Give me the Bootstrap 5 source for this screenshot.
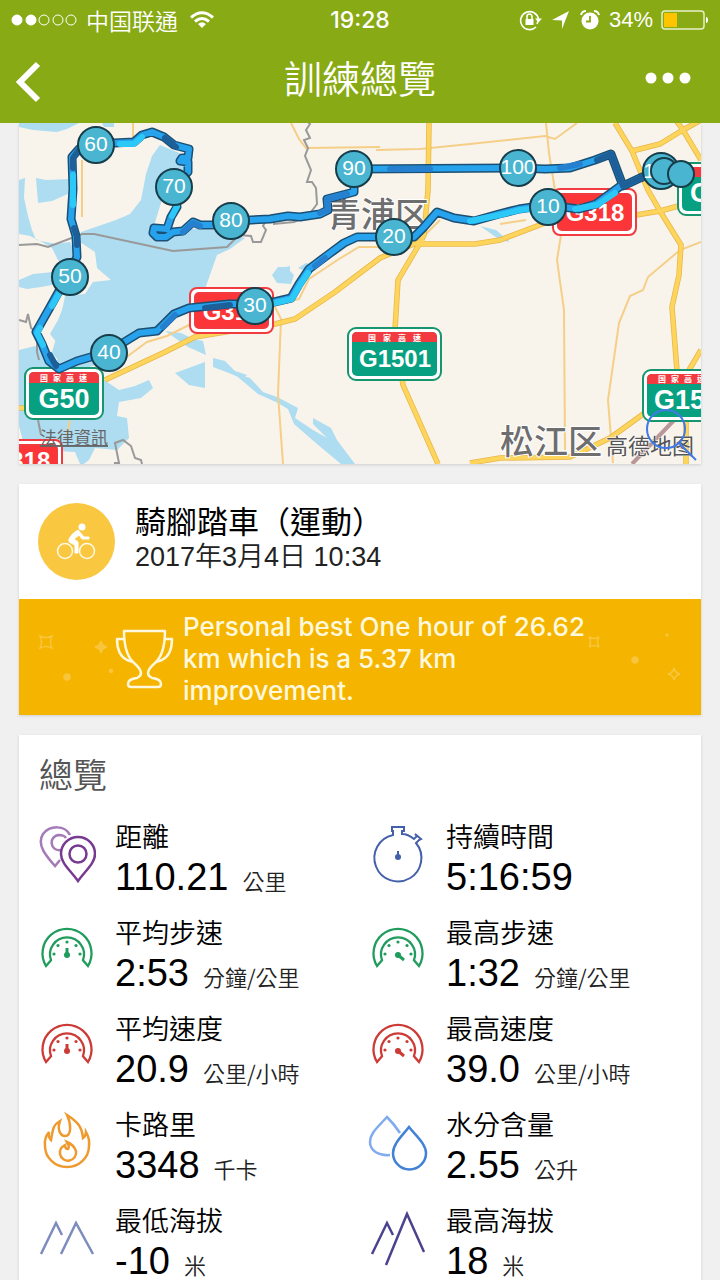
<!DOCTYPE html>
<html lang="zh-Hant">
<head>
<meta charset="utf-8">
<meta name="viewport" content="width=device-width, initial-scale=1">
<title>訓練總覽</title>
<link href="https://cdn.jsdelivr.net/npm/bootstrap@5.3.0/dist/css/bootstrap.min.css" rel="stylesheet">
<style>
  body { background: #f0f0f0; color: #000; font-family: "Liberation Sans", "Noto Sans CJK TC", sans-serif; font-weight: 350; }
  .top-bar { background: #88aa14; color: #fff; }
  .status { display: grid; grid-template-columns: 1fr auto 1fr; height: 40px; padding: 0 11px; font-size: 22px; line-height: 40px; }
  .carrier { font-family: "Noto Sans CJK SC", sans-serif; font-size: 23px; line-height: 38px; }
  .clock { font-family: Inter, sans-serif; font-size: 23px; font-weight: 500; }
  .title-row { display: grid; grid-template-columns: 1fr auto 1fr; height: 83px; padding: 0 15px; }
  .title-row h1 { font-size: 38px; line-height: 80px; font-weight: 350; }
  .bar-btn { color: #fff; line-height: 0; }
  .scroller { overflow-y: auto; scrollbar-width: none; padding: 0 19px 20px; }
  .scroller::-webkit-scrollbar { display: none; }
  .panel { background: #fff; box-shadow: 0 1px 3px #0002; margin-bottom: 20px; }
  .sport { padding: 19px; gap: 20px; }
  .sport h2 { font-size: 31px; line-height: 40px; font-weight: 400; }
  .sport time { font-size: 27px; line-height: 28px; color: #222; }
  .record { background: #f4b400; color: #fff8dd; padding: 12px 96px 8px; gap: 9px; font-family: Inter, sans-serif; font-size: 26px; line-height: 32px; font-weight: 500; }
  .sparks { top: 0; height: 116px; width: 120px; }
  .sparks-l { left: 0; } .sparks-r { right: 0; width: 130px; }
  .overview { padding: 16px 0 0 20px; }
  .overview h2 { font-size: 34px; line-height: 50px; font-weight: 350; color: #555; margin-bottom: 20px; }
  .stat { gap: 20px; height: 96px; }
  .stat > div { margin-left: -1px; }
  .stat > svg { width: 57px; height: 64px; margin-top: 2px; fill: none; stroke-width: 3; }
  .stat dt { font-size: 27px; line-height: 34px; font-weight: 350; }
  .stat dd { font-size: 38px; line-height: 44px; font-weight: 400; margin: 0; }
  .stat dd small { font-size: 22px; font-weight: 350; font-family: "Noto Sans CJK TC", sans-serif; line-height: 1; margin-left: 14px; color: #222; }
  .map text { font-family: "Liberation Sans", "Noto Sans CJK SC", sans-serif; }
  .km circle { fill: #49b5d0; stroke: #173d4b; stroke-width: 2; }
  .km text { fill: #fff; font-size: 21px; text-anchor: middle; font-weight: 400; }
  .shield { fill: #fff; font-weight: 700; text-anchor: middle; }
  .map .tiny { font-size: 8px; fill: #fff; font-weight: 700; }
</style>
</head>
<body class="vh-100 d-flex flex-column overflow-hidden">
<header class="top-bar flex-shrink-0">
  <div class="status">
    <div class="d-flex align-items-center gap-2">
      <svg width="67" height="14" viewBox="0 0 67 14" fill="none" stroke="#fff"><circle cx="6" cy="7" r="5" fill="#fff"/><circle cx="20" cy="7" r="5" fill="#fff"/><circle cx="33" cy="7" r="5"/><circle cx="47" cy="7" r="5"/><circle cx="60" cy="7" r="5"/></svg>
      <span class="carrier">中国联通</span>
      <svg class="ms-1" width="24" height="18" viewBox="0 0 24 18" fill="none" stroke="#fff" stroke-width="3"><path d="M1 6.500Q12-3 23 6.500M5 10.500Q12 4.500 19 10.500"/><path d="M8 13q4-3.500 8 0l-4 4z" fill="#fff" stroke="none"/></svg>
    </div>
    <span class="clock">19:28</span>
    <div class="d-flex align-items-center justify-content-end">
      <svg width="24" height="22" viewBox="0 0 24 22" fill="none" stroke="#fff" stroke-width="1.600"><path d="M17 18A9 9 0 1 1 19.500 10M18 15q1-2 1-4"/><path d="M16 9.500h7l-3.500 4z" fill="#fff" stroke="none"/><path d="M8 10V7.500a2.500 2.500 0 0 1 5 0V10"/><path d="M6.500 10h8v6h-8z" fill="#fff" stroke="none"/></svg>
      <svg class="ms-2" width="20" height="20" viewBox="0 0 20 20" fill="#fff"><path d="M18 1 11 19V10.500L1 10z"/></svg>
      <svg class="ms-2" width="22" height="22" viewBox="0 0 22 22"><circle cx="11" cy="12" r="8.500" fill="#fff"/><path d="M2 6q1-4 5-4M20 6q-1-4-5-4" fill="none" stroke="#fff" stroke-width="2"/><path d="M11 7v5.500H7" fill="none" stroke="#88aa14" stroke-width="1.800"/></svg>
      <span class="ms-2 me-2">34%</span>
      <svg width="48" height="20" viewBox="0 0 48 20"><rect x="1" y="1" width="42" height="18" rx="3" fill="none" stroke="#e8efc9" stroke-width="1.500"/><path d="M3 3h13v14H3z" fill="#ffc400"/><path d="M45 7q2 0 2 3t-2 3z" fill="#fff"/></svg>
    </div>
  </div>
  <div class="title-row">
    <button class="bar-btn btn p-0 border-0 text-start" aria-label="返回"><svg width="28" height="44" viewBox="0 0 28 44" fill="none" stroke="#fff" stroke-width="6"><path d="M23 4 5 22 23 40"/></svg></button>
    <h1 class="m-0">訓練總覽</h1>
    <button class="bar-btn btn p-0 border-0 text-end" aria-label="更多"><svg class="mb-2" width="62" height="12" viewBox="0 0 62 12" fill="#fff"><circle cx="8" cy="6" r="5.500"/><circle cx="25" cy="6" r="5.500"/><circle cx="42" cy="6" r="5.500"/></svg></button>
  </div>
</header>

<main class="scroller flex-grow-1">
  <section class="panel">
    <svg class="map d-block w-100" viewBox="19 123 682 341" role="img" aria-label="路線地圖">
      <rect x="19" y="123" width="682" height="341" fill="#f8f4ec"/>
      <g fill="#aedcf0">
        <path d="M160 145l24 10 3 17-22 18-13 42 24-4 38 2 31 8-15 11-13 6-12 34-5 18-25 12-22 13-27 6-10 20-30 10-24-2-10-14 6-20 3-16 4-20 20-2 8-12 18-2-14-12-2-16-15-10 1-10 35-12 14-6 11-14 5-26 6-18z"/>
        <path d="M36 178l10 2 24-1v14l-18 8-14 2zM19 180l6-2-1 20 4 18 4 14 4 10 20 4 14-2 7 16-14 6-5-4-6-12-10-6-12-6-11-2zM19 280l14-6 20-2 4 12-16 3-14 2-8-2zM19 123h60l-12 6-10 3-24-2-14-3zM102 123h12v4h-10z"/>
        <path d="M19 350l16-4 20 14 30 2 22 20 12 8 16-4 14-6 4 8-12 10-22 4-2 14 10 2 2 20-12 12-22-2-6 12-8 6-6-14-34-2-14 6-8-30z"/>
        <path d="M58 320l8-20 10 30-18 14-8-10zM165 331l16 2 12 6 10 2 3 14-18-8zM213 358l12 3 10 10 12 4-4 4-14-6-16-6zM175 373l30-11v26l-16-3z"/>
        <path d="M233 373l17 5 13 14 14 5 21 11-3 10 18 12 14 8-14-14v-6l18 10 6 12 18 24h-14l-24-20-23-20-6-15-12-7-18-8zM272 275l6-8h8l4-1v5l4 4-3 9-14-1zM298 268l8-5 8 2-4 8zM480 226l16 4 14 12-10-2z"/>
      </g>
      <path fill="none" stroke="#f5cf88" stroke-width="2" d="M291 123l8 16 7 9 74-1M376 150l44-1 50-5 75-8 10 3 22-16M546 123l3 30 6 37M561 235l-4 25 7 50 1 140M701 242l-21 8-32 27-5 13-13 6-11 27-11 77 5 63M133 123v14M82 160v57M275 307l6 12-3 75 5 70M195 322l-28 14-20 6-30 22M285 303l14-4 10-20 30-20 20-12h20M70 420l-3 15M440 220l-20 20M500 224l26-4"/>
      <defs><path id="roads" d="M429 123l-1 67-4 45-4 8-22 37-3 50 8 55 20 45 15 34M421 244h54l25-4 45-17M630 216l30-5 41-11M424 240l-44 18-45 34-40 27-20 5-80 13-30 15-60 28M19 408h12M615 123l17 28 16 39 12 21 21 34-2 30-7 32 5 64M686 418v46M632 151l28-7 23-14 18-10M675 119l8 11 18 30M470 463l30-5 70-1 40-19 36-26M701 350l-12 20"/></defs>
      <use href="#roads" fill="none" stroke="#e9b64a" stroke-width="5.500"/>
      <use href="#roads" fill="none" stroke="#fdd55c" stroke-width="4"/>
      <path fill="none" stroke="#999" stroke-width="2" d="M19 245l18-1 11 3 34-13h12l79 17 54-4 12-12 12 1 2 6h8l5-12-3-4 4-8h7v6l20-2 14-6 9-12-1-16-4-6h-5l4-12-6-14 3-8-4-8 6-2-4-8 4-6-6-6M19 320l7 2 2-8 3 14 6 4v20l2 8M38 420l3 15M114 463h5l-4-20 8-3 8 6 4 12 6 2 1 4"/>
      <path d="M632 464l48-50" stroke="#b79799" stroke-width="4"/>
      <g fill="#6e6e6e" stroke="#fff" stroke-width="2" paint-order="stroke">
        <text x="327" y="227" font-size="34" font-weight="500">青浦区</text>
        <text x="500" y="454" font-size="34" font-weight="500">松江区</text>
      </g>
      <g stroke="#f23b40" stroke-width="2">
        <rect x="553" y="189" width="83" height="46" rx="7" fill="#fff"/><rect x="558" y="194" width="73" height="36" rx="4" fill="#fb3538"/>
        <rect x="190" y="288" width="83" height="45" rx="7" fill="#fff"/><rect x="195" y="293" width="73" height="35" rx="4" fill="#fb3538"/>
        <rect x="-22" y="440" width="84" height="46" rx="7" fill="#fff"/><rect x="-17" y="445" width="74" height="36" rx="4" fill="#fb3538"/>
      </g>
      <g stroke="#16966f" stroke-width="2">
        <rect x="25" y="368" width="78" height="51" rx="8" fill="#fff"/>
        <rect x="348" y="328" width="93" height="52" rx="8" fill="#fff"/>
        <rect x="643" y="370" width="93" height="51" rx="8" fill="#fff"/>
        <rect x="678" y="163" width="93" height="52" rx="8" fill="#fff"/>
      </g>
      <g fill="#07a080">
        <rect x="29" y="372" width="70" height="43" rx="5"/><rect x="352" y="332" width="85" height="44" rx="5"/><rect x="647" y="374" width="85" height="43" rx="5"/><rect x="682" y="167" width="85" height="44" rx="5"/>
      </g>
      <g fill="#f23b40"><path d="M29 383v-6q0-5 5-5h60q5 0 5 5v6zM352 342v-5q0-5 5-5h75q5 0 5 5v5zM647 384v-5q0-5 5-5h55v10zM682 177v-5q0-5 5-5h30v10z"/></g>
      <text class="tiny" x="40" y="381">国</text><text class="tiny" x="53" y="381">家</text><text class="tiny" x="66" y="381">高</text><text class="tiny" x="79" y="381">速</text>
      <text class="tiny" x="368" y="341">国</text><text class="tiny" x="383" y="341">家</text><text class="tiny" x="398" y="341">高</text><text class="tiny" x="413" y="341">速</text>
      <text class="tiny" x="658" y="382">国</text><text class="tiny" x="671" y="382">家</text><text class="tiny" x="684" y="382">高</text><text class="tiny" x="697" y="382">速</text>
      <g class="shield">
        <text x="595" y="221" font-size="24">G318</text>
        <text x="232" y="320" font-size="24">G318</text>
        <text x="21" y="469" font-size="24">G318</text>
        <text x="64" y="408" font-size="27">G50</text>
        <text x="395" y="367" font-size="24">G1501</text>
        <text x="654" y="409" font-size="27" style="text-anchor:start">G1501</text>
        <text x="690" y="202" font-size="27" style="text-anchor:start">G50</text>
      </g>
      <defs><path id="route" d="M655 172l-15 6-17 8-12-32-16 6-25 8-25 1-27-1-164 1v23l-27 7 1 11-8 4-20 3-12-1-18 3-39 2-18 4h-13l-7-3-10 9-10 1-7 5h-9l-4-4 1-5 13 1 4-12 6-10-4-21 15-14v-10l-8-1 2-3h6l1-9-15-4-10-8-12-5-10 3-8 7-20 1h-19l-16 6-7 8 1 32-2 30 5 17 1 21-8 17-10 17-10 18-13 23 6 12 7 17 10 8 18-8 31-9 31-19 18-2 17-17 15-6 40-4h25l20-2 17-4 8-14 10-15 20-15 15-11 13-6h57l10-10 13-15 17 6 20 3 25-7 20-5 27-4 33 4 17-5 26-19"/></defs>
      <g fill="none" stroke-linejoin="round" stroke-linecap="round" stroke-width="6">
        <use href="#route" stroke="#1b4f73" stroke-width="9"/>
        <use href="#route" stroke="#27a2ec"/>
        <path stroke="#1d5f99" d="M655 172l-15 6-17 8-12-32-14 6M176 147l-11-9M78 151l-5 7v10M74 228l3 9v8M50 355l6 11M205 308l25-3"/>
        <path stroke="#2680d0" d="M320 213l8-3-1-11 20-5M200 226l-7-3-10 9M390 169h40M560 168l20-4M175 315l-12 12M325 258l-10 8"/>
        <path stroke="#2cc9f8" d="M73 175v30M40 328l-3 5 6 12M120 144h14l8-7M275 303l17-4 8-14 8-12M470 221l30-6 20-5 10-1M575 209l22-4 18-12M172 216l5-10M60 292l-8 14"/>
      </g>
      <g class="km">
        <circle cx="96" cy="145" r="18"/><text x="96" y="151">60</text>
        <circle cx="174" cy="187" r="18"/><text x="174" y="193">70</text>
        <circle cx="231" cy="221" r="18"/><text x="231" y="227">80</text>
        <circle cx="354" cy="169" r="18"/><text x="354" y="175">90</text>
        <circle cx="518" cy="168" r="18"/><text x="518" y="174">100</text>
        <circle cx="548" cy="207" r="18"/><text x="548" y="213">10</text>
        <circle cx="394" cy="237" r="18"/><text x="394" y="243">20</text>
        <circle cx="255" cy="306" r="18"/><text x="255" y="312">30</text>
        <circle cx="109" cy="353" r="18"/><text x="109" y="359">40</text>
        <circle cx="70" cy="277" r="18"/><text x="70" y="283">50</text>
        <circle cx="661" cy="171" r="18"/><text x="649" y="178">1</text>
        <circle cx="664" cy="171" r="13"/><circle cx="681" cy="174" r="13"/>
      </g>
      <text x="606" y="454" font-size="22" font-weight="400" fill="#555" stroke="#fff" stroke-width="1" paint-order="stroke">高德地图</text>
      <a href="#legal"><text x="40" y="444" font-size="17" font-weight="400" fill="#666" text-decoration="underline">法律資訊</text></a>
      <g fill="none" stroke="#3f7ae8" stroke-width="2"><circle cx="666" cy="429" r="19"/><path d="M679 443l17 17"/></g>
    </svg>
  </section>

  <section class="panel">
    <div class="sport d-flex">
      <svg class="flex-shrink-0" width="77" height="77" viewBox="0 0 77 77"><circle cx="38.500" cy="38.500" r="38.500" fill="#f9c740"/><g fill="none" stroke="#fffae8" stroke-width="1.500"><circle cx="27" cy="48" r="7.500"/><circle cx="49" cy="48" r="7.500"/></g><circle cx="44" cy="24" r="3.500" fill="#fff"/><path d="M40 27q-6 3-9 9-1 3 2 4l4 2v8h3V39l-4-3 5-4 3 4h7v-2h-5z" fill="#fff" stroke="#fff" stroke-width="1" stroke-linejoin="round"/></svg>
      <div>
        <h2 class="m-0">騎腳踏車（運動）</h2>
        <time class="d-block" datetime="2017-03-04T10:34">2017年3月4日 10:34</time>
      </div>
    </div>
    <div class="record d-flex align-items-center position-relative">
      <svg class="sparks sparks-l position-absolute" viewBox="0 0 120 116" fill="none" stroke="#f8c53c" stroke-width="1.500"><path d="M21 37q6 3 12 0-3 6 0 12-6-3-12 0 3-6 0-12z"/><path d="M82 42q1 5 6 6-5 1-6 6-1-5-6-6 5-1 6-6z" fill="#f8c53c"/><circle cx="48" cy="78" r="3" fill="#f8c53c"/><circle cx="92" cy="72" r="1.500" fill="#f8c53c"/></svg>
      <svg class="sparks sparks-r position-absolute" viewBox="0 0 130 116" fill="none" stroke="#f8c53c" stroke-width="1.500"><path d="M18 38q5 3 10 0-3 5 0 10-5-3-10 0 3-5 0-10z"/><path d="M103 69q1 5 6 6-5 1-6 6-1-5-6-6 5-1 6-6z"/><circle cx="64" cy="61" r="3" fill="#f8c53c"/><circle cx="96" cy="36" r="1" fill="#f8c53c"/></svg>
      <svg class="flex-shrink-0" width="59" height="60" viewBox="0 0 59 60" fill="none" stroke="#fff8dd" stroke-width="2.500" stroke-linejoin="round"><path d="M9 2h41q0 22-9 31-8 7-8 11 0 3 4 5 9 1 9 6 0 3-3 3H16q-3 0-3-3 0-5 9-6 4-2 4-5 0-4-8-11Q9 24 9 2z"/><path d="M9 10H2q0 16 10 21l6 2M50 10h7q0 16-10 21l-6 2"/></svg>
      <div>Personal best One hour of 26.62 km which is a 5.37 km improvement.</div>
    </div>
  </section>

  <section class="panel overview">
    <h2>總覽</h2>
    <svg class="d-none">
      <symbol id="gauge" viewBox="0 0 57 64"><path d="M7 47A24.500 24.500 0 1 1 49 47L44 41.200A17 17 0 1 0 12 41.200Z" stroke-width="2.300"/><g fill="currentColor" stroke="none"><circle cx="28" cy="23" r="1.600"/><circle cx="19" cy="26.500" r="1.600"/><circle cx="37" cy="26.500" r="1.600"/><circle cx="15" cy="35" r="1.600"/><circle cx="41" cy="35" r="1.600"/></g></symbol>
    </svg>
    <dl class="row g-0 m-0">
      <div class="col-6 stat d-flex"><svg viewBox="0 0 57 64"><path d="M31 12C26 2 11 2 4 11-3 22 8 34 16 43l5-6M22 27c-11 2-13-14-2-15q5 0 7 3" stroke="#a47bb6" stroke-width="2.500"/><path d="M39 58C31 47 22 40 22 31a17 17 0 0 1 34 0c0 9-9 16-17 27z" stroke="#773a90" stroke-width="2.500"/><circle cx="39" cy="31" r="8.500" stroke="#773a90" stroke-width="2.500"/></svg><div><dt>距離</dt><dd>110.21<small>公里</small></dd></div></div>
      <div class="col-6 stat d-flex"><svg viewBox="0 0 57 64" stroke="#4560ab"><path d="M23 11V8h-1V4h12v4h-2v3q6 0 12 5l3-3-2-2 6 5-2 1-3 3a23.500 23.500 0 1 1-23-8z" stroke-width="2"/><circle cx="28" cy="34" r="3" fill="#4560ab" stroke="none"/><path d="M28 28v7" stroke-width="2"/></svg><div><dt>持續時間</dt><dd>5:16:59</dd></div></div>
      <div class="col-6 stat d-flex"><svg viewBox="0 0 57 64" color="#209c5c" stroke="#209c5c"><use href="#gauge"/><path d="M28 29v8" stroke-width="3"/><circle cx="28" cy="36" r="3" fill="#209c5c" stroke="none"/></svg><div><dt>平均步速</dt><dd>2:53<small>分鐘/公里</small></dd></div></div>
      <div class="col-6 stat d-flex"><svg viewBox="0 0 57 64" color="#209c5c" stroke="#209c5c"><use href="#gauge"/><path d="M28 36l6 5" stroke-width="3"/><circle cx="28" cy="36" r="3" fill="#209c5c" stroke="none"/></svg><div><dt>最高步速</dt><dd>1:32<small>分鐘/公里</small></dd></div></div>
      <div class="col-6 stat d-flex"><svg viewBox="0 0 57 64" color="#cc3b36" stroke="#cc3b36"><use href="#gauge"/><path d="M28 29v8" stroke-width="3"/><circle cx="28" cy="36" r="3" fill="#cc3b36" stroke="none"/></svg><div><dt>平均速度</dt><dd>20.9<small>公里/小時</small></dd></div></div>
      <div class="col-6 stat d-flex"><svg viewBox="0 0 57 64" color="#cc3b36" stroke="#cc3b36"><use href="#gauge"/><path d="M28 36l6 5" stroke-width="3"/><circle cx="28" cy="36" r="3" fill="#cc3b36" stroke="none"/></svg><div><dt>最高速度</dt><dd>39.0<small>公里/小時</small></dd></div></div>
      <div class="col-6 stat d-flex"><svg viewBox="0 0 57 64" stroke="#ee9a2e"><path d="M28 4c11 7 15 12 16 23q3-2 3-6 4 7 3 14a22 21 0 0 1-44 0q-1-8 4-14-1 5 2 8c2-11 2-15 9-19-3 8 0 15 5 15 7 0 6-13 2-21z" stroke-width="2.500"/><path d="M28 31q7 3 9 9a8 8 0 0 1-16 3q-1-6 5-9 0 4 3 4 2-2-1-7z" stroke-width="2.500"/></svg><div><dt>卡路里</dt><dd>3348<small>千卡</small></dd></div></div>
      <div class="col-6 stat d-flex"><svg class="overflow-visible" viewBox="0 0 57 64"><path d="M30 22Q24 13 17 6C8 16 0 22 0 31c0 9 9 14 20 13" stroke="#7fabef" stroke-width="2.500"/><path d="M39 16c-7 9-16 17-16 26a16 16 0 0 0 33 0c0-9-10-17-17-26z" stroke="#4181d6" stroke-width="2.500"/></svg><div><dt>水分含量</dt><dd>2.55<small>公升</small></dd></div></div>
      <div class="col-6 stat d-flex"><svg viewBox="0 0 57 64" stroke="#7c8dbd"><path d="M2 47 17 16l6 12M22 47 37 16 54 47" stroke-width="2.500"/></svg><div><dt>最低海拔</dt><dd>-10<small>米</small></dd></div></div>
      <div class="col-6 stat d-flex"><svg viewBox="0 0 57 64" stroke="#4b4390"><path d="M2 47 17 16l6 12M16 58 37 7 54 45" stroke-width="2.500"/></svg><div><dt>最高海拔</dt><dd>18<small>米</small></dd></div></div>
    </dl>
  </section>
</main>
<script src="https://cdn.jsdelivr.net/npm/bootstrap@5.3.0/dist/js/bootstrap.bundle.min.js"></script>
</body>
</html>
